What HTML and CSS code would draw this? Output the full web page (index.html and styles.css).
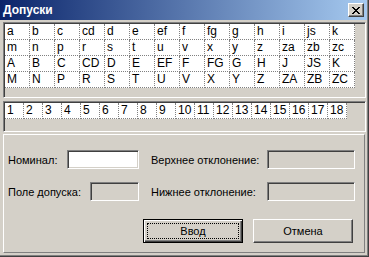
FILE: index.html
```html
<!DOCTYPE html>
<html lang="ru">

<head>
    <meta charset="UTF-8">
    <meta name="viewport" content="width=device-width, initial-scale=1.0">
    <title>Допуски</title>
    <link rel="stylesheet" href="styles.css">
</head>

<body>
    <div class="window">
        <div class="titlebar">
            <span class="title">Допуски</span>
            <button type="button" class="close" aria-label="Закрыть">
                <svg width="8" height="7" viewBox="0 0 8 7" shape-rendering="crispEdges">
                    <path fill="#000" d="M0 0h2v1H0z M6 0h2v1H6z M1 1h2v1H1z M5 1h2v1H5z M2 2h4v1H2z M3 3h2v1H3z M2 4h4v1H2z M1 5h2v1H1z M5 5h2v1H5z M0 6h2v1H0z M6 6h2v1H6z" />
                </svg>
            </button>
        </div>

        <div class="client">
            <div class="sunken letters">
                <div class="cell">a</div><div class="cell">b</div><div class="cell">c</div><div class="cell">cd</div><div class="cell">d</div><div class="cell">e</div><div class="cell">ef</div>
                <div class="cell">f</div><div class="cell">fg</div><div class="cell">g</div><div class="cell">h</div><div class="cell">i</div><div class="cell">js</div><div class="cell">k</div>
                <div class="cell">m</div><div class="cell">n</div><div class="cell">p</div><div class="cell">r</div><div class="cell">s</div><div class="cell">t</div><div class="cell">u</div>
                <div class="cell">v</div><div class="cell">x</div><div class="cell">y</div><div class="cell">z</div><div class="cell">za</div><div class="cell">zb</div><div class="cell">zc</div>
                <div class="cell">A</div><div class="cell">B</div><div class="cell">C</div><div class="cell">CD</div><div class="cell">D</div><div class="cell">E</div><div class="cell">EF</div>
                <div class="cell">F</div><div class="cell">FG</div><div class="cell">G</div><div class="cell">H</div><div class="cell">J</div><div class="cell">JS</div><div class="cell">K</div>
                <div class="cell">M</div><div class="cell">N</div><div class="cell">P</div><div class="cell">R</div><div class="cell">S</div><div class="cell">T</div><div class="cell">U</div>
                <div class="cell">V</div><div class="cell">X</div><div class="cell">Y</div><div class="cell">Z</div><div class="cell">ZA</div><div class="cell">ZB</div><div class="cell">ZC</div>
            </div>

            <div class="sunken numbers">
                <div class="cell">1</div><div class="cell">2</div><div class="cell">3</div><div class="cell">4</div><div class="cell">5</div><div class="cell">6</div>
                <div class="cell">7</div><div class="cell">8</div><div class="cell">9</div><div class="cell">10</div><div class="cell">11</div><div class="cell">12</div>
                <div class="cell">13</div><div class="cell">14</div><div class="cell">15</div><div class="cell">16</div><div class="cell">17</div><div class="cell">18</div>
            </div>

            <div class="panel">
                <div class="fields">
                    <div class="field">
                        <label for="nominal">Номинал:</label>
                        <input type="text" id="nominal" class="edit edit-nominal">
                    </div>
                    <div class="field">
                        <label for="upper">Верхнее отклонение:</label>
                        <input type="text" id="upper" class="edit edit-dev" disabled>
                    </div>
                    <div class="field">
                        <label for="field">Поле допуска:</label>
                        <input type="text" id="field" class="edit edit-field" disabled>
                    </div>
                    <div class="field">
                        <label for="lower">Нижнее отклонение:</label>
                        <input type="text" id="lower" class="edit edit-dev" disabled>
                    </div>
                </div>
                <div class="buttons">
                    <button type="button" class="btn btn-default">Ввод</button>
                    <button type="button" class="btn">Отмена</button>
                </div>
            </div>
        </div>
    </div>
</body>

</html>
```

FILE: styles.css
```css
body {
    margin: 0;
    background-color: #d4d0c8;
    font-family: "Liberation Sans", Arial, sans-serif;
    font-size: 11px;
    color: #000;
}

.window {
    width: 369px;
    height: 257px;
    box-sizing: border-box;
    padding: 0 2px 2px 0;
    display: flex;
    flex-direction: column;
    box-shadow: inset -1px -1px 0 #404040, inset -2px -2px 0 #808080;
}

.titlebar {
    height: 20px;
    flex-shrink: 0;
    display: flex;
    align-items: center;
    justify-content: space-between;
    padding: 0 3px 0 3px;
    background: linear-gradient(to right, #0a246a, #a6caf0);
}

.title {
    color: #fff;
    font-weight: bold;
    font-size: 12px;
}

.close {
    width: 16px;
    height: 14px;
    padding: 0;
    box-sizing: border-box;
    display: flex;
    align-items: center;
    justify-content: center;
    background-color: #d4d0c8;
    border: 1px solid;
    border-color: #fff #404040 #404040 #fff;
    box-shadow: inset -1px -1px 0 #808080;
}

.client {
    flex: 1;
    display: flex;
    flex-direction: column;
    padding: 2px 1px 0 3px;
}

.sunken {
    box-sizing: border-box;
    padding: 1px;
    border: 1px solid;
    border-color: #808080 #fff #fff #808080;
    box-shadow: inset 1px 1px 0 #404040, inset -1px -1px 0 #d4d0c8;
    display: grid;
    grid-auto-rows: 16px;
    align-content: start;
}

.letters {
    height: 76px;
    grid-template-columns: repeat(14, 25px);
}

.numbers {
    height: 31px;
    margin-top: 3px;
    grid-template-columns: repeat(18, 19px);
}

.cell {
    box-sizing: border-box;
    background-color: #fff;
    border-right: 1px dotted #808080;
    border-bottom: 1px dotted #808080;
    padding-left: 2px;
    font-size: 12px;
    line-height: 15px;
    white-space: nowrap;
}

.panel {
    height: 119px;
    box-sizing: border-box;
    margin: 2px 1px 0 0;
    padding: 15px 11px 9px 4px;
    border: 1px solid;
    border-color: #fff #808080 #808080 #fff;
}

.fields {
    display: grid;
    grid-template-columns: 131px 204px;
    column-gap: 12px;
    row-gap: 13px;
}

.field {
    height: 19px;
    display: flex;
    align-items: center;
    justify-content: space-between;
}

.edit {
    height: 19px;
    box-sizing: border-box;
    margin: 0;
    padding: 0 3px;
    font: inherit;
    background-color: #d4d0c8;
    border: 1px solid;
    border-color: #808080 #fff #fff #808080;
    box-shadow: inset 1px 1px 0 #404040, inset -1px -1px 0 #d4d0c8;
    outline: none;
}

.edit-nominal {
    width: 72px;
    background-color: #fff;
}

.edit-field {
    width: 49px;
}

.edit-dev {
    width: 88px;
}

.buttons {
    display: flex;
    justify-content: flex-end;
    gap: 10px;
    margin-top: 18px;
}

.btn {
    width: 100px;
    height: 24px;
    box-sizing: border-box;
    padding: 0;
    font: inherit;
    color: #000;
    background-color: #d4d0c8;
    border: 1px solid;
    border-color: #fff #404040 #404040 #fff;
    box-shadow: inset -1px -1px 0 #808080;
}

.btn-default {
    border: 1px solid #000;
    box-shadow: inset 1px 1px 0 #fff, inset -1px -1px 0 #404040, inset -2px -2px 0 #808080;
    outline: 1px dotted #000;
    outline-offset: -5px;
}
```
